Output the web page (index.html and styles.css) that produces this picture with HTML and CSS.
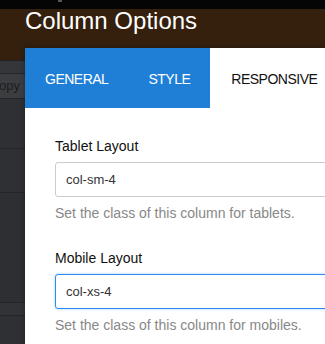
FILE: index.html
```html
<!DOCTYPE html>
<html>
<head>
    <title>Column Options</title>
    <link rel="stylesheet" href="styles.css">
</head>

<body>
    <div class="topbar"><span class="topbar-mark"></span></div>

    <div class="header">
        <h1 class="title">Column Options</h1>
    </div>

    <div class="sidebar">
        <div class="side-row side-row-first"></div>
        <div class="side-row side-row-copy">Copy</div>
        <div class="side-row side-row-tall"></div>
        <div class="side-row side-row-mid"></div>
        <div class="side-row side-row-big"></div>
        <div class="side-row"></div>
    </div>

    <div class="modal">
        <div class="tabs">
            <div class="tab-group">
                <span class="tab">General</span>
                <span class="tab">Style</span>
            </div>
            <span class="tab tab-active">Responsive</span>
        </div>

        <div class="modal-body">
            <div class="field">
                <label class="field-label">Tablet Layout</label>
                <input type="text" class="field-input" value="col-sm-4">
                <p class="field-help">Set the class of this column for tablets.</p>
            </div>

            <div class="field">
                <label class="field-label">Mobile Layout</label>
                <input type="text" class="field-input field-input-focus" value="col-xs-4">
                <p class="field-help">Set the class of this column for mobiles.</p>
            </div>
        </div>
    </div>
</body>

</html>
```

FILE: styles.css
```css
body {
    margin: 0;
    width: 325px;
    height: 344px;
    overflow: hidden;
    position: relative;
    background: #2f3033;
    font-family: "Liberation Sans", Arial, sans-serif;
}

.topbar {
    height: 9px;
    background: #050505;
    position: relative;
}

.topbar-mark {
    position: absolute;
    left: 58px;
    top: 0;
    width: 4px;
    height: 2px;
    background: #555;
}

.header {
    height: 51px;
    background: #35200d;
    padding-left: 25px;
}

.title {
    margin: 0;
    font-size: 24px;
    line-height: 24px;
    font-weight: normal;
    color: #ffffff;
}

.sidebar {
    width: 25px;
    border-top: 1px solid #202022;
}

.side-row {
    height: 12px;
    border-bottom: 1px solid #242527;
    background: #323336;
}

.side-row-first {
    background: #353639;
}

.side-row-copy {
    height: 24px;
    background: #3c3d40;
    color: #1c1c1e;
    font-size: 13px;
    line-height: 24px;
    text-align: right;
    white-space: nowrap;
    overflow: hidden;
    direction: rtl;
    padding-right: 5px;
    width: 20px;
}

.side-row-tall {
    height: 49px;
    background: #2f3033;
}

.side-row-mid {
    height: 43px;
    background: #2f3033;
}

.side-row-big {
    height: 109px;
    background: #2e2f32;
}

.modal {
    position: absolute;
    left: 25px;
    top: 48px;
    width: 560px;
    height: 420px;
    background: #ffffff;
    box-shadow: 0 0 5px rgba(0, 0, 0, 0.35);
}

.tabs {
    display: flex;
    height: 60px;
}

.tab-group {
    display: flex;
    background: #1f7fd7;
}

.tab {
    padding: 2px 20px 0;
    line-height: 58px;
    font-size: 14px;
    letter-spacing: -0.5px;
    text-transform: uppercase;
    color: #ffffff;
}

.tab-active {
    color: #111111;
    padding-left: 21px;
}

.modal-body {
    padding: 28px 30px 0;
}

.field {
    margin-bottom: 25px;
}

.field-label {
    display: block;
    font-size: 14px;
    line-height: 20px;
    color: #111111;
    margin-bottom: 6px;
}

.field-input {
    display: block;
    box-sizing: border-box;
    width: 100%;
    height: 35px;
    padding: 0 10px;
    border: 1px solid #cccccc;
    border-radius: 3px;
    font-family: "Liberation Sans", Arial, sans-serif;
    font-size: 13px;
    color: #333333;
    outline: none;
}

.field-input-focus {
    border-color: #2a8cf0;
    box-shadow: 0 0 3px rgba(42, 140, 240, 0.4);
}

.field-help {
    margin: 6px 0 0;
    font-size: 14px;
    line-height: 20px;
    color: #888888;
}
```
